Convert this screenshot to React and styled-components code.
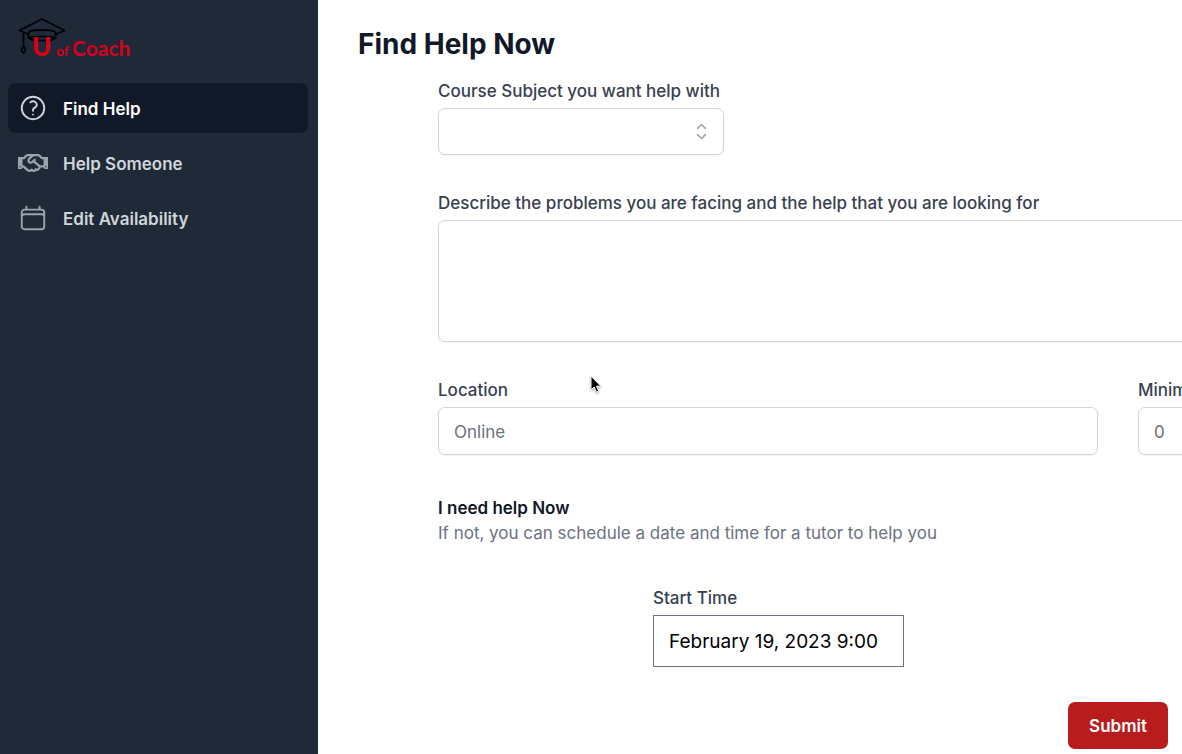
import React from "react";
import styled, { createGlobalStyle, css } from "styled-components";
import {
  HiOutlineQuestionMarkCircle,
  HiOutlineCalendar,
  HiChevronUpDown,
} from "react-icons/hi2";
import { FaRegHandshake } from "react-icons/fa";

const GlobalStyle = createGlobalStyle`
  *, *::before, *::after { box-sizing: border-box; }
  body {
    margin: 0;
    background: #fff;
    color: #111827;
    font-family: Inter, "Liberation Sans", sans-serif;
    font-size: 17px;
    line-height: 25px;
    -webkit-font-smoothing: antialiased;
  }
  input, select, textarea, button { font: inherit; }
`;

const Shell = styled.div`
  display: flex;
  min-height: 100vh;
  overflow: hidden;
`;

const Sidebar = styled.aside`
  flex: 0 0 318px;
  display: flex;
  flex-direction: column;
  gap: 18px;
  padding: 15px 10px 15px 8px;
  background: #1f2937;
`;

const LogoLink = styled.a`
  display: block;
  height: 50px;
  padding-left: 8px;
`;

const Nav = styled.nav`
  display: flex;
  flex-direction: column;
  gap: 5px;
`;

const NavItem = styled.a`
  display: flex;
  align-items: center;
  gap: 15px;
  height: 50px;
  padding: 0 10px;
  border-radius: 7px;
  font-weight: 600;
  text-decoration: none;
  color: ${(p) => (p.$active ? "#fff" : "#d1d5db")};
  background: ${(p) => (p.$active ? "#111827" : "transparent")};

  svg {
    flex: none;
    width: 30px;
    height: 30px;
    color: ${(p) => (p.$active ? "#d1d5db" : "#9ca3af")};
  }
`;

const NavText = styled.span`
  padding-top: 2px;
`;

const Main = styled.main`
  flex: 1;
  min-width: 0;
  padding: 25px 0 5px 40px;
  overflow: hidden;
`;

const Title = styled.h1`
  margin: 0 0 15px;
  font-size: 28px;
  line-height: 38px;
  font-weight: 700;
`;

const Form = styled.form`
  display: flex;
  flex-direction: column;
  min-width: 920px;
  margin-left: 80px;
`;

const Field = styled.div`
  display: flex;
  flex-direction: column;
  gap: 3px;
  width: ${(p) => (p.$fit ? "fit-content" : "auto")};
`;

const Label = styled.label`
  line-height: 27px;
  font-weight: 500;
  color: #374151;
`;

const control = css`
  width: 100%;
  border: 1px solid #d1d5db;
  border-radius: 7px;
  background: #fff;
  color: #111827;
  box-shadow: 0 1px 2px rgba(0, 0, 0, 0.05);
  outline: none;
  &::placeholder { color: #6b7280; opacity: 1; }
`;

const SelectBox = styled.div`
  display: grid;
  align-items: center;
  min-width: 286px;

  > * { grid-area: 1 / 1; }

  svg {
    justify-self: end;
    margin-right: 10px;
    width: 25px;
    height: 25px;
    color: #9ca3af;
    pointer-events: none;
  }
`;

const Select = styled.select`
  ${control}
  height: 47px;
  padding: 0 50px 0 15px;
  appearance: none;
`;

const TextArea = styled.textarea`
  ${control}
  display: block;
  height: 122px;
  padding: 10px 15px;
  resize: none;
`;

const TextInput = styled.input`
  ${control}
  height: 48px;
  padding: 1px 15px 0;
`;

const Row = styled.div`
  display: grid;
  grid-template-columns: minmax(0, 3fr) minmax(0, 1fr);
  gap: 40px;
  margin: 35px 0 41px;
`;

const Spaced = styled.div`
  margin-top: 35px;
`;

const Notice = styled.div`
  display: flex;
  flex-direction: column;
`;

const NoticeTitle = styled.span`
  font-weight: 600;
`;

const NoticeText = styled.span`
  color: #6b7280;
`;

const Schedule = styled.div`
  margin: 39px 0 0 215px;
`;

const TimeInput = styled.input`
  width: 251px;
  height: 52px;
  padding: 0 15px;
  border: 1px solid #6b7280;
  border-radius: 0;
  background: #fff;
  color: #000;
  font-size: 19px;
`;

const Actions = styled.div`
  display: flex;
  justify-content: flex-end;
  margin: 35px 190px 0 0;
`;

const Submit = styled.button`
  min-width: 100px;
  height: 47px;
  padding: 2px 20px 0;
  border: 0;
  border-radius: 7px;
  background: #b91c1c;
  color: #fff;
  font-weight: 600;
`;

const Pointer = styled.svg`
  position: absolute;
  left: 588px;
  top: 374px;
  pointer-events: none;
  filter: drop-shadow(0 1px 1px rgba(0, 0, 0, 0.35));
`;

function Logo() {
  return (
    <svg width="120" height="50" viewBox="16 15 120 50" role="img" aria-label="U of Coach">
      <g fill="none" stroke="#020306" strokeWidth="1.8" strokeLinejoin="round" strokeLinecap="round">
        <path d="M28.500 34.500 19.500 30.500 42 19l22.500 11.500-9 4" />
        <path d="M28.500 33c0-1.800 5-3 13.500-3s13.500 1.200 13.500 3v5c-5-1.800-22-1.800-27 0z" />
        <path d="M28.500 38c3 2.300 9 2.700 13.500 2.700s10.500-.4 13.500-2.700" />
        <path d="M23.500 32.500v14" />
        <path d="M23.500 46.500c-1.500 1.500-2.300 3-1.800 4.200l1.800 2.300 1.800-2.300c.5-1.200-.3-2.700-1.800-4.200z" />
      </g>
      <g fill="#d6001c" fontFamily="Lato, Inter, sans-serif">
        <text x="32" y="56" fontSize="26" fontWeight="900">U</text>
        <text x="56" y="56" fontSize="14" fontWeight="700">of</text>
        <text x="72" y="56" fontSize="21" fontWeight="700">Coach</text>
      </g>
    </svg>
  );
}

export default function App() {
  return (
    <>
      <GlobalStyle />
      <Shell>
        <Sidebar>
          <LogoLink href="#">
            <Logo />
          </LogoLink>
          <Nav>
            <NavItem href="#find" $active aria-current="page">
              <HiOutlineQuestionMarkCircle />
              <NavText>Find Help</NavText>
            </NavItem>
            <NavItem href="#help">
              <FaRegHandshake />
              <NavText>Help Someone</NavText>
            </NavItem>
            <NavItem href="#availability">
              <HiOutlineCalendar />
              <NavText>Edit Availability</NavText>
            </NavItem>
          </Nav>
        </Sidebar>
        <Main>
          <Title>Find Help Now</Title>
          <Form onSubmit={(e) => e.preventDefault()}>
            <Field $fit>
              <Label htmlFor="subject">Course Subject you want help with</Label>
              <SelectBox>
                <Select id="subject" defaultValue="">
                  <option value=""></option>
                </Select>
                <HiChevronUpDown />
              </SelectBox>
            </Field>
            <Spaced>
              <Field>
                <Label htmlFor="problem">
                  Describe the problems you are facing and the help that you are looking for
                </Label>
                <TextArea id="problem" />
              </Field>
            </Spaced>
            <Row>
              <Field>
                <Label htmlFor="location">Location</Label>
                <TextInput id="location" placeholder="Online" />
              </Field>
              <Field>
                <Label htmlFor="minimum">Minimum</Label>
                <TextInput id="minimum" placeholder="0" />
              </Field>
            </Row>
            <Notice>
              <NoticeTitle>I need help Now</NoticeTitle>
              <NoticeText>If not, you can schedule a date and time for a tutor to help you</NoticeText>
            </Notice>
            <Schedule>
              <Field $fit>
                <Label htmlFor="start">Start Time</Label>
                <TimeInput id="start" defaultValue="February 19, 2023 9:00" />
              </Field>
            </Schedule>
            <Actions>
              <Submit type="submit">Submit</Submit>
            </Actions>
          </Form>
        </Main>
      </Shell>
      <Pointer width="16" height="22" viewBox="0 0 16 22" aria-hidden="true">
        <path
          d="M3 2v14l3.200-3 2.200 5.200 2.300-1-2.200-5h4.300z"
          fill="#000"
          stroke="#fff"
          strokeWidth="1"
        />
      </Pointer>
    </>
  );
}
